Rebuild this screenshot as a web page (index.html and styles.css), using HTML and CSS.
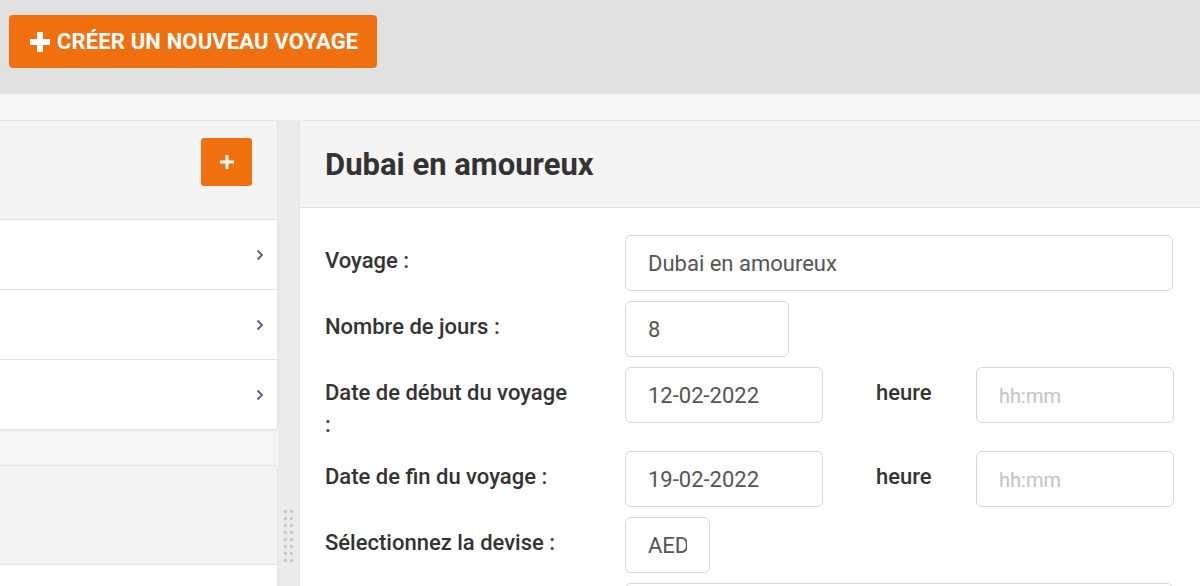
FILE: index.html
```html
<!DOCTYPE html>
<html lang="fr">
<head>
<meta charset="utf-8">
<title>Voyages</title>
<link rel="stylesheet" href="styles.css">
</head>
<body>
<header class="topbar">
  <button class="btn-create" type="button">
    <svg class="plus-lg" viewBox="0 0 20 20" width="20" height="20" aria-hidden="true"><path d="M7 0h6v7h7v6h-7v7H7v-7H0V7h7z" fill="#fff"/></svg>
    <span>CRÉER UN NOUVEAU VOYAGE</span>
  </button>
</header>
<main class="main">
  <aside class="left">
    <section class="panel list-panel">
      <div class="panel-head">
        <button class="btn-add" type="button">
          <svg viewBox="0 0 14 14" width="14" height="14" aria-hidden="true"><path d="M5.5 0h3v5.5H14v3H8.5V14h-3V8.5H0v-3h5.5z" fill="#fff"/></svg>
        </button>
      </div>
      <ul class="list">
        <li class="list-item"><svg class="chev" viewBox="0 0 8 12" width="8" height="12"><path d="M1.5 1.5L6 6l-4.5 4.5" fill="none" stroke="#56607a" stroke-width="1.8"/></svg></li>
        <li class="list-item"><svg class="chev" viewBox="0 0 8 12" width="8" height="12"><path d="M1.5 1.5L6 6l-4.5 4.5" fill="none" stroke="#56607a" stroke-width="1.8"/></svg></li>
        <li class="list-item"><svg class="chev" viewBox="0 0 8 12" width="8" height="12"><path d="M1.5 1.5L6 6l-4.5 4.5" fill="none" stroke="#56607a" stroke-width="1.8"/></svg></li>
      </ul>
    </section>
    <section class="panel second-panel">
      <div class="panel-head second-head"></div>
      <div class="second-body"></div>
    </section>
  </aside>
  <div class="gutter">
    <div class="grip">
      <span></span><span></span><span></span><span></span><span></span><span></span><span></span><span></span>
      <span></span><span></span><span></span><span></span><span></span><span></span><span></span><span></span>
    </div>
  </div>
  <section class="panel detail">
    <div class="detail-head"><h1 class="title">Dubai en amoureux</h1></div>
    <form class="form">
      <div class="row">
        <label class="lbl">Voyage :</label>
        <input class="field w-full" type="text" value="Dubai en amoureux">
      </div>
      <div class="row">
        <label class="lbl">Nombre de jours :</label>
        <input class="field w-days" type="text" value="8">
      </div>
      <div class="row">
        <label class="lbl">Date de début du voyage :</label>
        <input class="field w-date" type="text" value="12-02-2022">
        <span class="lbl-h">heure</span>
        <input class="field w-time" type="text" placeholder="hh:mm">
      </div>
      <div class="row">
        <label class="lbl">Date de fin du voyage :</label>
        <input class="field w-date" type="text" value="19-02-2022">
        <span class="lbl-h">heure</span>
        <input class="field w-time" type="text" placeholder="hh:mm">
      </div>
      <div class="row">
        <label class="lbl">Sélectionnez la devise :</label>
        <input class="field w-cur" type="text" value="AED">
      </div>
      <div class="row">
        <label class="lbl"></label>
        <input class="field w-full" type="text">
      </div>
    </form>
  </section>
</main>
</body>
</html>
```

FILE: styles.css
```css
* { box-sizing: border-box; }
html, body { margin: 0; height: 100%; overflow: hidden; }
body {
  background: #f5f5f5;
  font-family: Roboto, "Liberation Sans", Arial, sans-serif;
  color: #333;
}
.topbar {
  height: 94px;
  background: #e1e1e1;
  padding: 15px 9px 0;
}
.btn-create {
  display: flex;
  align-items: center;
  gap: 7px;
  width: 368px;
  height: 53px;
  padding: 0 0 0 21px;
  border: 0;
  border-radius: 4px;
  background: #f0700f;
  color: #fff;
  font-family: Roboto, "Liberation Sans", Arial, sans-serif;
  font-weight: 700;
  font-size: 22px;
  letter-spacing: 0.15px;
}
.main {
  display: flex;
  padding-top: 26px;
  height: calc(100% - 94px);
}
.left {
  width: 279px;
  display: flex;
  flex-direction: column;
  gap: 35px;
}
.panel {
  background: #fff;
  border: 1px solid #e2e2e2;
}
.list-panel {
  border-left: 0;
  border-radius: 0 4px 4px 0;
  box-shadow: 0 1px 2px rgba(0,0,0,0.06);
}
.panel-head {
  background: #f4f4f4;
  height: 99px;
  border-bottom: 1px solid #e0e0e0;
  display: flex;
  justify-content: flex-end;
  align-items: flex-start;
  padding: 17px 25px 0 0;
  border-radius: 0 4px 0 0;
}
.btn-add {
  width: 51px;
  height: 48px;
  border: 0;
  border-radius: 3px;
  background: #f0700f;
  display: flex;
  align-items: center;
  justify-content: center;
  padding: 0;
}
.list { list-style: none; margin: 0; padding: 0; }
.list-item {
  height: 70px;
  border-bottom: 1px solid #e3e3e3;
  display: flex;
  align-items: center;
  justify-content: flex-end;
  padding-right: 13px;
}
.list-item:last-child { border-bottom: 0; height: 69px; }
.second-panel {
  flex: 1;
  border-left: 0;
  border-bottom: 0;
  border-radius: 0 4px 0 0;
}
.second-head { height: 99px; }
.gutter {
  width: 21px;
  background: #ebebeb;
  display: flex;
  justify-content: center;
  padding-top: 390px;
}
.grip {
  display: grid;
  grid-template-columns: 3px 3px;
  grid-auto-rows: 3px;
  column-gap: 3px;
  row-gap: 4px;
  height: max-content;
}
.grip span { background: #c9c9c9; }
.detail {
  flex: 1;
  border-right: 0;
  border-bottom: 0;
  border-radius: 4px 0 0 0;
}
.detail-head {
  height: 87px;
  background: #f4f4f4;
  border-bottom: 1px solid #e0e0e0;
  border-radius: 4px 0 0 0;
  padding: 0 25px;
  display: flex;
  align-items: center;
}
.title {
  margin: 0;
  font-size: 31px;
  font-weight: 700;
  color: #333;
}
.form {
  padding: 27px 26px 0 25px;
}
.row {
  display: flex;
  align-items: flex-start;
  margin-bottom: 10px;
}
.lbl {
  width: 300px;
  flex: none;
  padding: 10px 48px 0 0;
  font-size: 22px;
  font-weight: 500;
  line-height: 32px;
  color: #333;
}
.lbl-h {
  width: 153px;
  flex: none;
  padding: 10px 0 0 53px;
  font-size: 22px;
  font-weight: 500;
  line-height: 32px;
}
.field {
  flex: none;
  height: 56px;
  border: 1px solid #d6d6d6;
  border-radius: 6px;
  padding: 0 22px;
  font-family: Roboto, "Liberation Sans", Arial, sans-serif;
  font-size: 22px;
  color: #555;
  background: #fff;
  outline: none;
}
.field::placeholder { color: #c2c2c2; font-size: 20px; }
.w-full { width: 548px; }
.w-days { width: 164px; }
.w-date { width: 198px; }
.w-time { width: 198px; }
.w-cur { width: 85px; }
```
